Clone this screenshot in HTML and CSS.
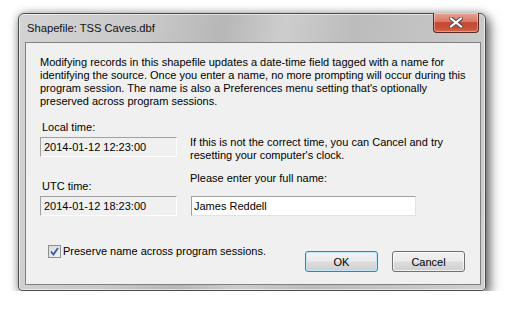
FILE: index.html
```html
<!DOCTYPE html>
<html>
<head>
    <title>Shapefile: TSS Caves.dbf</title>
    <link rel="stylesheet" href="styles.css">
</head>
<body>
    <div class="window">
        <div class="titlebar">
            <span class="title">Shapefile: TSS Caves.dbf</span>
            <button class="close" title="Close">
                <svg width="14" height="11" viewBox="0 0 14 11">
                    <path d="M2 1.5 L12 9.5 M12 1.5 L2 9.5" stroke="#4b4b4b" stroke-width="4.2" stroke-linecap="square"/>
                    <path d="M2 1.5 L12 9.5 M12 1.5 L2 9.5" stroke="#fff" stroke-width="2.2" stroke-linecap="square"/>
                </svg>
            </button>
        </div>
        <div class="client">
            <p class="intro">Modifying records in this shapefile updates a date-time field tagged with a name for<br>identifying the source. Once you enter a name, no more prompting will occur during this<br>program session. The name is also a Preferences menu setting that's optionally<br>preserved across program sessions.</p>

            <div class="fields">
                <div class="field">
                    <label>Local time:</label>
                    <div class="readout">2014-01-12 12:23:00</div>
                </div>
                <p class="note">If this is not the correct time, you can Cancel and try<br>resetting your computer's clock.</p>
                <div class="field">
                    <label>UTC time:</label>
                    <div class="readout">2014-01-12 18:23:00</div>
                </div>
                <div class="field name">
                    <label for="fullName">Please enter your full name:</label>
                    <input type="text" id="fullName" value="James Reddell">
                </div>
            </div>

            <div class="actions">
                <label class="check">
                    <span class="box">
                        <svg width="9" height="9" viewBox="0 0 9 9">
                            <path d="M1 4.5 L3.4 7.5 L8 1" fill="none" stroke="#3a5ba8" stroke-width="1.8"/>
                        </svg>
                    </span>
                    Preserve name across program sessions.
                </label>
                <div class="buttons">
                    <button class="btn default">OK</button>
                    <button class="btn">Cancel</button>
                </div>
            </div>
        </div>
    </div>
</body>
</html>
```

FILE: styles.css
```css
body {
    margin: 0;
    padding: 13px 0 0 18px;
    background: #fff;
    font-family: "Liberation Sans", Arial, sans-serif;
    font-size: 11px;
    color: #000;
}
.window {
    width: 468px;
    box-sizing: border-box;
    border: 1px solid #4d4d4d;
    border-radius: 6px 6px 4px 4px;
    background: linear-gradient(100deg, #d3d3d3 0%, #c9c9c9 25%, #b7b7b7 40%, #cdcdcd 52%, #bcbcbc 66%, #c6c6c6 85%, #d0d0d0 100%);
    box-shadow: inset 0 0 0 1px rgba(255, 255, 255, 0.55), 4px 5px 12px rgba(0, 0, 0, 0.55), 0 0 8px rgba(0, 0, 0, 0.3);
    display: flex;
    flex-direction: column;
}
.titlebar {
    height: 28px;
    display: flex;
    align-items: center;
    justify-content: space-between;
    padding-left: 8px;
}
.title {
    font-size: 11.2px;
    color: #111;
    padding-bottom: 1px;
}
.close {
    align-self: flex-start;
    margin: -1px 6px 0 0;
    width: 46px;
    height: 20px;
    padding: 0;
    border: 1px solid #5a2a22;
    border-top: none;
    border-radius: 0 0 4px 4px;
    background: linear-gradient(#e6a595 0%, #d97a67 45%, #c74a33 50%, #c9503a 80%, #d76b52 100%);
    box-shadow: inset 0 0 0 1px rgba(255, 255, 255, 0.35);
    display: flex;
    align-items: center;
    justify-content: center;
}
.client {
    margin: 0 4px 5px 6px;
    border: 1px solid #808080;
    background: #f0f0f0;
    padding: 13px 15px 12px 14px;
}
.intro {
    margin: 0;
    line-height: 13px;
    white-space: nowrap;
}
.fields {
    display: grid;
    grid-template-columns: 137px 1fr;
    column-gap: 13px;
    row-gap: 10px;
    margin-top: 13px;
}
.field label {
    display: block;
    line-height: 13px;
    margin-bottom: 3px;
    margin-left: 2px;
}
.field.name {
    align-self: end;
}
.field.name label {
    margin-left: 0;
    margin-bottom: 11px;
}
.readout {
    box-sizing: border-box;
    height: 20px;
    padding: 3px 3px 0;
    line-height: 13px;
    border: 1px solid #fff;
    border-top-color: #a0a0a0;
    border-left-color: #a0a0a0;
    background: #f0f0f0;
}
.fields > .field:nth-child(3) {
    align-self: end;
}
.note {
    margin: 0;
    padding-top: 15px;
    line-height: 13px;
    white-space: nowrap;
}
input {
    display: block;
    box-sizing: border-box;
    width: 225px;
    height: 20px;
    margin: 0 0 0 1px;
    padding: 0 2px;
    border: 1px solid #e3e3e3;
    border-top-color: #a0a0a0;
    border-left-color: #a0a0a0;
    font: inherit;
    background: #fff;
}
.actions {
    display: flex;
    justify-content: space-between;
    align-items: flex-start;
    margin-top: 29px;
}
.check {
    display: flex;
    align-items: center;
    margin-left: 8px;
    line-height: 13px;
}
.box {
    box-sizing: border-box;
    width: 13px;
    height: 13px;
    margin-right: 2px;
    border: 1px solid #8e8f8f;
    background: linear-gradient(135deg, #d9d9d9, #f4f4f4);
    display: flex;
    align-items: center;
    justify-content: center;
}
.buttons {
    display: flex;
    gap: 14px;
    margin-top: 6px;
}
.btn {
    width: 73px;
    height: 21px;
    padding: 0;
    border: 1px solid #707070;
    border-radius: 3px;
    background: linear-gradient(#f2f2f2 0%, #ebebeb 48%, #dddddd 52%, #cfcfcf 100%);
    box-shadow: inset 0 0 0 1px rgba(255, 255, 255, 0.7);
    font: inherit;
    color: #000;
}
.btn.default {
    border-color: #3c7fb1;
    box-shadow: inset 0 0 0 1px #bfe6f9;
}
```
